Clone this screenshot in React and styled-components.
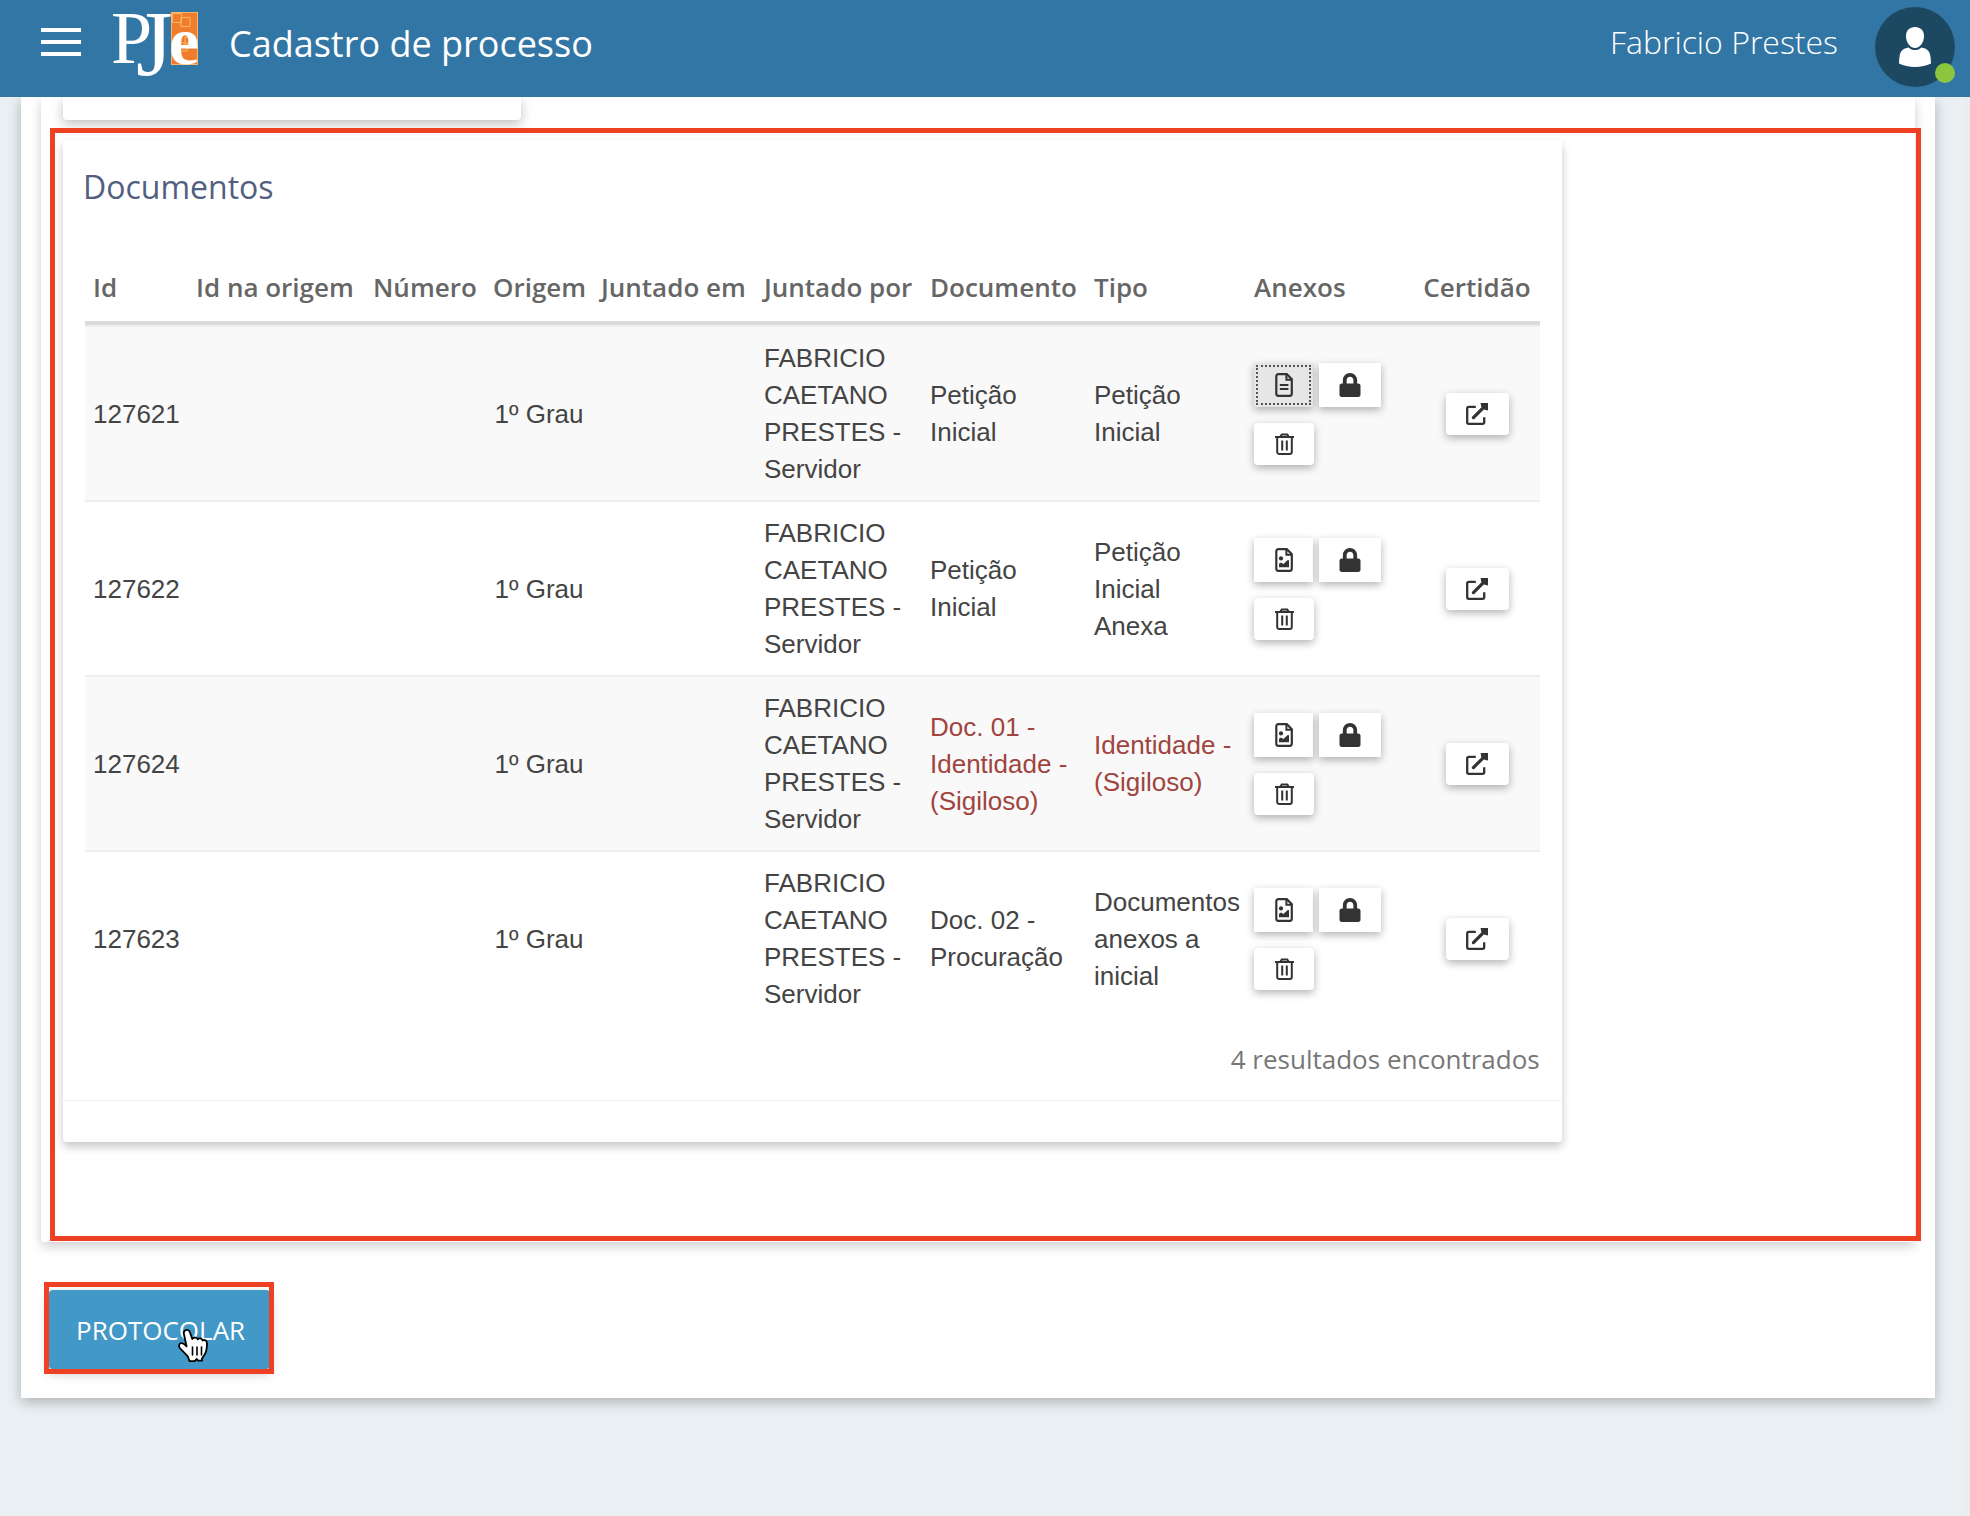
import React from 'react';
import styled, { createGlobalStyle } from 'styled-components';
import { FaLock } from 'react-icons/fa';

const GlobalStyle = createGlobalStyle`
  * {
    box-sizing: border-box;
  }
  body {
    margin: 0;
    background: #e9eff2;
    font-family: 'Open Sans', sans-serif;
    font-size: 26px;
    line-height: 37px;
    color: #444444;
  }
`;

const Header = styled.header`
  position: relative;
  z-index: 2;
  display: flex;
  align-items: flex-start;
  height: 97px;
  padding: 0 15px 0 41px;
  background: #3276a6;
  color: white;
`;
const MenuButton = styled.button`
  display: flex;
  flex-direction: column;
  gap: 8px;
  width: 40px;
  margin: 28px 30px 0 0;
  padding: 0;
  border: none;
  background: none;
  cursor: pointer;
`;
const MenuBar = styled.span`
  height: 4px;
  width: 100%;
  background: white;
`;
const Logo = styled.svg`
  width: 90px;
  height: 97px;
  overflow: visible;
  font-family: 'Liberation Serif', serif;
  fill: white;
`;
const PageTitle = styled.h1`
  flex: 1;
  margin: 20px 0 0 28px;
  font-size: 36px;
  font-weight: 400;
  line-height: 48px;
`;
const UserName = styled.span`
  margin: 18px 37px 0 0;
  font-size: 32px;
  font-weight: 300;
  line-height: 48px;
`;
const Avatar = styled.div`
  position: relative;
  width: 80px;
  height: 80px;
  margin-top: 7px;
  border-radius: 50%;
  background: #1d4862;
  svg {
    display: block;
  }
`;
const Status = styled.span`
  position: absolute;
  right: 0;
  bottom: 4px;
  width: 20px;
  height: 20px;
  border-radius: 50%;
  background: #8cc63f;
`;

const Page = styled.div`
  min-height: calc(100vh - 97px);
  padding: 0 30px 118px 21px;
  border-right: 5px solid #ececec;
`;
const Container = styled.main`
  padding: 0 20px 29px;
  background: white;
  box-shadow: 0 4px 12px rgba(0, 0, 0, 0.25);
`;
const Section = styled.section`
  position: relative;
  padding: 0 22px 100px;
  border-radius: 0 0 4px 4px;
  box-shadow: 0 4px 12px rgba(0, 0, 0, 0.2);
`;
const PreviousCard = styled.div`
  width: 25%;
  height: 23px;
  border-radius: 0 0 4px 4px;
  box-shadow: 0 4px 12px rgba(0, 0, 0, 0.25);
`;
const Card = styled.div`
  width: 81.9%;
  margin-top: 20px;
  padding-bottom: 41px;
  border-radius: 4px;
  box-shadow: 0 5px 10px rgba(0, 0, 0, 0.22);
`;
const CardBody = styled.div`
  padding: 27px 22px 22px;
  border-bottom: 1px solid #f0f0f0;
  border-radius: 4px;
`;
const CardTitle = styled.h2`
  margin: 0 0 49px -2px;
  font-size: 32px;
  font-weight: 400;
  line-height: 40px;
  color: #525f7f;
`;
const Highlight = styled.div`
  position: absolute;
  top: ${props => props.$top};
  right: ${props => props.$right};
  bottom: ${props => props.$bottom};
  left: ${props => props.$left};
  border: 5px solid #ee4023;
  pointer-events: none;
`;

const Table = styled.table`
  width: 100%;
  table-layout: fixed;
  border-spacing: 0;
`;
const Col = styled.col`
  width: ${props => props.$width}px;
`;
const Th = styled.th`
  padding: 13px 8px 15px;
  border-bottom: 4px solid #dadada;
  font-weight: 600;
  text-align: ${props => props.$align || 'left'};
  white-space: nowrap;
  color: #666666;
`;
const Row = styled.tr`
  &:nth-child(odd) {
    background: #f9f9f9;
  }
`;
const Td = styled.td`
  padding: 13px 8px 12px;
  border-top: 2px solid #eeeeee;
  font-family: 'Liberation Sans', Arial, sans-serif;
  text-align: ${props => props.$align || 'left'};
  vertical-align: middle;
  color: ${props => (props.$secret ? '#a04440' : '#444444')};
`;
const Actions = styled.div`
  display: flex;
  flex-wrap: wrap;
  gap: 16px 6px;
`;
const IconButton = styled.button`
  display: inline-flex;
  align-items: center;
  justify-content: center;
  width: ${props => props.$width || 60}px;
  height: ${props => (props.$square ? 44 : 42)}px;
  padding: 0;
  border: none;
  border-radius: ${props => (props.$square ? 0 : 4)}px;
  background: ${props => (props.$active ? '#e6e6e6' : 'white')};
  outline: ${props => (props.$active ? '2px dotted #555555' : 'none')};
  outline-offset: -4px;
  box-shadow: 0 3px 8px rgba(0, 0, 0, 0.3);
  color: #333333;
  cursor: pointer;
  vertical-align: middle;
`;
const Results = styled.p`
  margin: 16px 0 0;
  text-align: right;
  color: #777777;
`;

const Footer = styled.div`
  padding: 48px 8px 0;
`;
const SubmitWrapper = styled.div`
  position: relative;
  display: inline-block;
  vertical-align: top;
`;
const SubmitButton = styled.button`
  display: block;
  height: 79px;
  padding: 0 25px 0 27px;
  border: none;
  border-radius: 4px;
  background: #4298c6;
  box-shadow: 0 4px 12px rgba(0, 0, 0, 0.25);
  font-family: inherit;
  font-size: 26px;
  color: white;
  cursor: pointer;
`;
const Pointer = styled.svg`
  position: absolute;
  top: 37px;
  left: 128px;
  width: 33px;
  height: 36px;
  pointer-events: none;
`;

const FileOutline = () => (
  <>
    <path
      d='M3.3 1.2H11.8L16.8 6.2V20.8a2 2 0 0 1-2 2H3.3a2 2 0 0 1-2-2V3.2a2 2 0 0 1 2-2z'
      strokeWidth='2.2'
    />
    <path d='M11.4 1.5V6.8H16.6' strokeWidth='2' />
  </>
);

const FileTextIcon = () => (
  <svg width='18' height='24' viewBox='0 0 18 24' fill='none' stroke='currentColor'>
    <FileOutline />
    <path d='M4.8 12h8.6M4.8 16h8.6' strokeWidth='2' />
  </svg>
);

const FileImageIcon = () => (
  <svg width='18' height='24' viewBox='0 0 18 24' fill='none' stroke='currentColor'>
    <FileOutline />
    <circle cx='6' cy='10.4' r='2.1' fill='currentColor' stroke='none' />
    <path
      d='M4 19.2v-3.4l2-1.4 2.4 1.6 4.6-4.2 1 .8v6.6z'
      fill='currentColor'
      stroke='none'
    />
  </svg>
);

const TrashIcon = () => (
  <svg width='19' height='22' viewBox='0 0 19 22' fill='none' stroke='currentColor'>
    <path d='M0 4h19' strokeWidth='2' />
    <path d='M5 4l1.8-2.6h5.4L14 4' strokeWidth='2' />
    <path
      d='M2.2 4.5V19a2 2 0 0 0 2 2h10.6a2 2 0 0 0 2-2V4.5M7.2 7.6v10M11.8 7.6v10'
      strokeWidth='2'
    />
  </svg>
);

const ExternalIcon = () => (
  <svg width='22' height='22' viewBox='0 0 22 22' fill='none' stroke='currentColor'>
    <path
      d='M9.8 3.8H2.8a1.6 1.6 0 0 0-1.6 1.6V19.2a1.6 1.6 0 0 0 1.6 1.6H16.6a1.6 1.6 0 0 0 1.6-1.6V14.2'
      strokeWidth='2.3'
    />
    <path d='M7.4 14.6L18.4 3.6' strokeWidth='3.2' strokeLinecap='round' />
    <path d='M14.6 0H22V7.4L18.6 6.8 15.2 3.4z' fill='currentColor' stroke='none' />
  </svg>
);

const columns = [
  { label: 'Id', width: 103 },
  { label: 'Id na origem', width: 177 },
  { label: 'Número', width: 120 },
  { label: 'Origem', width: 108 },
  { label: 'Juntado em', width: 163 },
  { label: 'Juntado por', width: 166 },
  { label: 'Documento', width: 164 },
  { label: 'Tipo', width: 160 },
  { label: 'Anexos', width: 168 },
  { label: 'Certidão', width: 126, align: 'center' }
];

const documents = [
  {
    id: '127621',
    document: 'Petição Inicial',
    type: 'Petição Inicial',
    text: true,
    active: true
  },
  {
    id: '127622',
    document: 'Petição Inicial',
    type: 'Petição Inicial Anexa'
  },
  {
    id: '127624',
    document: 'Doc. 01 - Identidade - (Sigiloso)',
    type: 'Identidade - (Sigiloso)',
    secret: true
  },
  {
    id: '127623',
    document: 'Doc. 02 - Procuração',
    type: 'Documentos anexos a inicial'
  }
];

const App = () => {
  const renderRows = () => {
    return documents.map(doc => {
      return (
        <Row key={doc.id}>
          <Td>{doc.id}</Td>
          <Td />
          <Td />
          <Td $align='center'>1º Grau</Td>
          <Td />
          <Td>FABRICIO CAETANO PRESTES - Servidor</Td>
          <Td $secret={doc.secret}>{doc.document}</Td>
          <Td $secret={doc.secret}>{doc.type}</Td>
          <Td>
            <Actions>
              <IconButton
                $square
                $width={59}
                $active={doc.active}
                aria-label='Visualizar'
              >
                {doc.text ? <FileTextIcon /> : <FileImageIcon />}
              </IconButton>
              <IconButton $square $width={62} aria-label='Sigilo'>
                <FaLock size={24} />
              </IconButton>
              <IconButton aria-label='Excluir'>
                <TrashIcon />
              </IconButton>
            </Actions>
          </Td>
          <Td $align='center'>
            <IconButton $width={63} aria-label='Certidão'>
              <ExternalIcon />
            </IconButton>
          </Td>
        </Row>
      );
    });
  };

  return (
    <>
      <GlobalStyle />
      <Header>
        <MenuButton aria-label='Menu'>
          <MenuBar />
          <MenuBar />
          <MenuBar />
        </MenuButton>
        <Logo viewBox='0 0 90 97'>
          <rect x='60' y='12' width='27' height='53' fill='#f07c2e' />
          <g fill='none' stroke='#f9b765' strokeWidth='1'>
            <path d='M60.5 12.5h26v52h-26z' />
            <path d='M61.5 13.5h9v9h-9zM70 17.500h9v9h-9zM74 37h9v9h-9zM68 43h8v8h-8z' />
          </g>
          <text y='63' fontSize='74'>
            P
            <tspan x='25' y='75' fontSize='94'>
              J
            </tspan>
            <tspan x='58' y='64' fontSize='68' fontWeight='700'>
              e
            </tspan>
          </text>
        </Logo>
        <PageTitle>Cadastro de processo</PageTitle>
        <UserName>Fabricio Prestes</UserName>
        <Avatar>
          <svg width='80' height='80' viewBox='0 0 80 80' fill='white'>
            <path d='M40 20c5.500 0 9 3.600 9 9 0 6-3.800 12-9 12s-9-6-9-12c0-5.400 3.500-9 9-9z' />
            <path d='M33.500 40.500c3.500 3.400 9.500 3.400 13 0 5.500 1 8 3.500 8.800 8 .4 2.500.6 5 .7 8-9 4.600-23 4.600-32 0 .1-3 .3-5.500.7-8 .8-4.500 3.300-7 8.800-8z' />
          </svg>
          <Status />
        </Avatar>
      </Header>
      <Page>
        <Container>
          <Section>
            <PreviousCard />
            <Card>
              <CardBody>
                <CardTitle>Documentos</CardTitle>
                <Table>
                  <colgroup>
                    {columns.map(column => (
                      <Col key={column.label} $width={column.width} />
                    ))}
                  </colgroup>
                  <thead>
                    <tr>
                      {columns.map(column => (
                        <Th key={column.label} $align={column.align}>
                          {column.label}
                        </Th>
                      ))}
                    </tr>
                  </thead>
                  <tbody>{renderRows()}</tbody>
                </Table>
                <Results>4 resultados encontrados</Results>
              </CardBody>
            </Card>
            <Highlight $top='31px' $right='-6px' $bottom='1px' $left='9px' />
          </Section>
          <Footer>
            <SubmitWrapper>
              <SubmitButton>PROTOCOLAR</SubmitButton>
              <Highlight $top='-8px' $right='-4px' $bottom='-5px' $left='-5px' />
              <Pointer viewBox='0 0 33 36'>
                <path
                  d='M8 3.500c2-1.500 4.200-.5 5 2l2.300 6.500c1.500-2.200 4.600-1.800 5.400.3 1.600-1.700 4.300-1 4.900 1.200 2.400-1.300 4.400.2 4.400 3 0 4.500-.5 8-2.300 11l-2.700 4v2.200h-4l-1.200-1.800-2 2.300h-5.300l-1.500-4.500-8.200-8.700c-1.500-2-.8-4.500 1.500-4.800 2-.2 3.600 1.200 5.300 3.200L7 7.500C6.500 5.800 6.800 4.300 8 3.500z'
                  fill='white'
                  stroke='black'
                  strokeWidth='1.8'
                  strokeLinejoin='round'
                />
                <path
                  d='M15.500 20v8M20 20v8M24.500 20v8'
                  stroke='black'
                  strokeWidth='1.600'
                  strokeLinecap='round'
                />
              </Pointer>
            </SubmitWrapper>
          </Footer>
        </Container>
      </Page>
    </>
  );
};

export default App;
